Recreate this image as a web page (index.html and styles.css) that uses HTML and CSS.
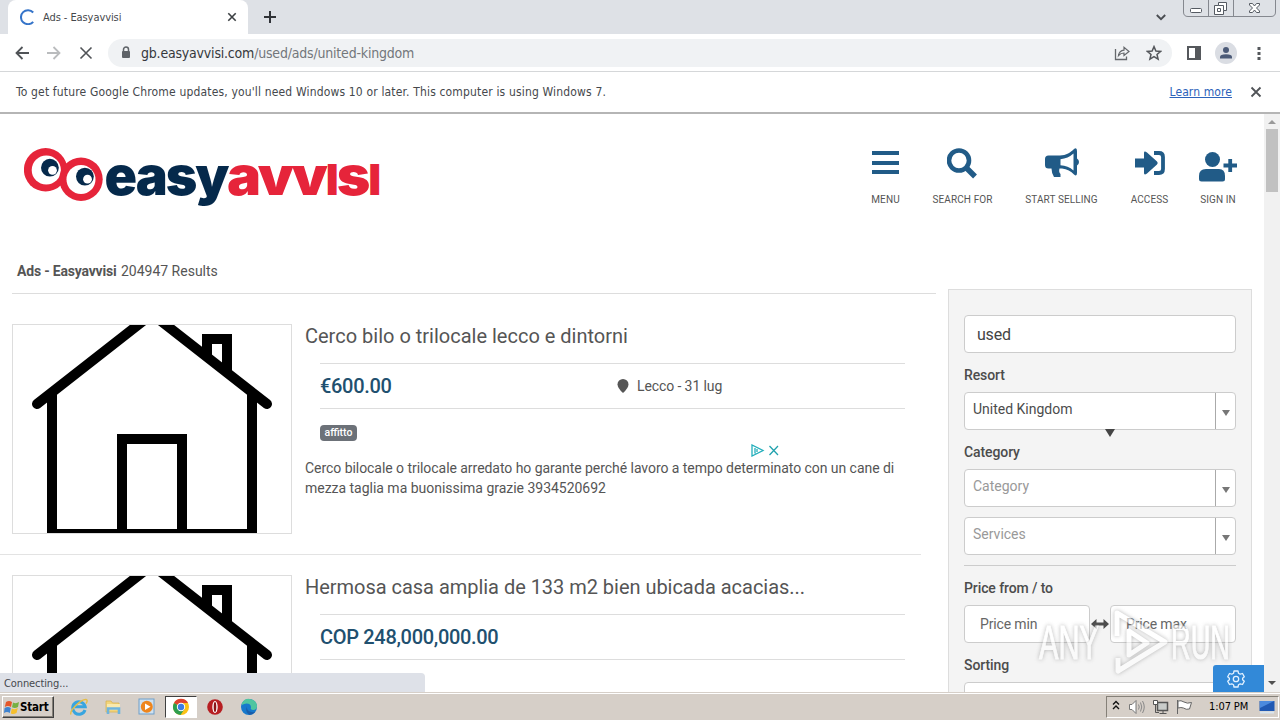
FILE: index.html
```
<!DOCTYPE html>
<html lang="en">

<head>
    <meta charset="utf-8">
    <meta name="viewport" content="width=device-width, initial-scale=1.0">
    <title>Ads - Easyavvisi</title>
    <link rel="stylesheet" href="styles.css">
</head>

<body>
    <!-- shared drawings -->
    <svg class="defs" width="0" height="0">
        <symbol id="house" viewBox="0 0 278 208">
            <g fill="none" stroke="#000" stroke-width="10">
                <path d="M39 66V209M239 66V209M34 209H244"/>
                <path d="M24 79L139 -11L254 79" stroke-linecap="round"/>
                <path d="M109 208V114H169V208"/>
                <path d="M194 34V14H214V50"/>
            </g>
        </symbol>
    </svg>

    <div class="screen">
        <!-- tabs -->
        <div class="tabstrip">
            <div class="tab">
                <svg class="spinner" width="16" height="16" viewBox="0 0 16 16"><path d="M13.2 3.5A7 7 0 1 0 13.2 12.8" fill="none" stroke="#3574c9" stroke-width="2"/></svg>
                <span class="tab-title">Ads - Easyavvisi</span>
                <svg width="10" height="10" viewBox="0 0 10 10"><path d="M1.3 1.3L8.7 8.7M8.7 1.3L1.3 8.7" stroke="#3c4043" stroke-width="1.6"/></svg>
            </div>
            <svg class="new-tab" width="12" height="12" viewBox="0 0 12 12"><path d="M6 0V12M0 6H12" stroke="#303338" stroke-width="2"/></svg>
            <svg class="tab-search" width="10" height="7" viewBox="0 0 10 7"><path d="M.8 1L5 5.2L9.2 1" fill="none" stroke="#4a4d52" stroke-width="1.9"/></svg>
            <svg class="window-buttons" width="93" height="17" viewBox="0 0 93 17">
                <path d="M.5 0V12Q.5 16.5 5 16.5H88Q92.5 16.5 92.5 12V0M25.5 0V16M50.5 0V16" fill="none" stroke="#85888f"/>
                <rect x="7.500" y="8.500" width="11" height="4" rx="1" fill="#fff" stroke="#555a62"/>
                <path d="M35.500 2.500H43.500V10.500H40.500V14.500H31.500V5.500H35.500Z" fill="#fff" stroke="#555a62"/>
                <path d="M35.500 5.500H40.500V10.500M34.500 8.500H37.500V11.500H34.500Z" fill="none" stroke="#555a62"/>
                <path d="M66.500 3.500H69.500L71.500 6L73.500 3.500H76.500V5L73.500 8L76.500 11V12.500H73.500L71.500 10L69.500 12.500H66.500V11L69.500 8L66.500 5Z" fill="#fff" stroke="#555a62"/>
            </svg>
        </div>

        <!-- address bar -->
        <div class="toolbar">
            <div class="nav-buttons">
                <svg width="14" height="14" viewBox="0 0 14 14"><path d="M14 7H1.500M7.500 1L1.500 7L7.500 13" fill="none" stroke="#505357" stroke-width="1.800"/></svg>
                <svg width="14" height="14" viewBox="0 0 14 14"><path d="M0 7H12.500M6.500 1L12.500 7L6.500 13" fill="none" stroke="#babcbe" stroke-width="1.800"/></svg>
                <svg width="14" height="14" viewBox="0 0 14 14"><path d="M1.500 1.500L12.500 12.500M12.500 1.500L1.500 12.500" stroke="#505357" stroke-width="1.600"/></svg>
            </div>
            <div class="omnibox">
                <svg width="10" height="13" viewBox="0 0 10 13"><path d="M2.500 6V3.500A2.500 2.500 0 0 1 7.500 3.500V6" fill="none" stroke="#5f6368" stroke-width="1.500"/><rect x="1" y="5" width="8" height="7" rx="1" fill="#5f6368"/></svg>
                <span class="url"><b>gb.easyavvisi.com</b>/used/ads/united-kingdom</span>
                <svg class="share" width="16" height="16" viewBox="0 0 16 16"><path d="M1.500 4V14.500H12.500V11.500" fill="none" stroke="#65686c" stroke-width="1.300"/><path d="M4.500 10.500C5 7.500 7 5.500 10 5.200V2.200L15 6.500L10 10.500V8C7.500 8 6 8.800 4.500 10.500Z" fill="none" stroke="#65686c" stroke-width="1.200"/></svg>
                <svg width="16" height="16" viewBox="0 0 16 16"><path d="M8 1.600L9.900 6L14.600 6.400L11 9.500L12.100 14.200L8 11.700L3.900 14.200L5 9.500L1.400 6.400L6.100 6Z" fill="none" stroke="#54575b" stroke-width="1.500"/></svg>
            </div>
            <svg class="panel-icon" width="14" height="14" viewBox="0 0 14 14"><rect x="1" y="1" width="12" height="12" fill="none" stroke="#55585c" stroke-width="2"/><rect x="8" y="1" width="5" height="12" fill="#55585c"/></svg>
            <svg class="avatar" width="22" height="22" viewBox="0 0 22 22"><circle cx="11" cy="11" r="11" fill="#dadde3"/><circle cx="11" cy="8" r="3" fill="#4b5a77"/><path d="M5 16.500V15Q5 12.200 11 12.200Q17 12.200 17 15V16.500Z" fill="#4b5a77"/></svg>
            <svg class="dots" width="4" height="14" viewBox="0 0 4 14"><path d="M.5 1H3.500V4H.5ZM.5 6H3.500V9H.5ZM.5 11H3.500V14H.5Z" fill="#55585c"/></svg>
        </div>

        <!-- update notice -->
        <div class="infobar">
            <span class="info-text">To get future Google Chrome updates, you'll need Windows 10 or later. This computer is using Windows 7.</span>
            <a class="learn">Learn more</a>
            <svg width="12" height="12" viewBox="0 0 12 12"><path d="M1.500 1.500L10.500 10.500M10.500 1.500L1.500 10.500" stroke="#505357" stroke-width="1.800"/></svg>
        </div>

        <div class="viewport">
            <div class="page">
                <div class="header">
                    <!-- logo -->
                    <svg class="logo" width="356" height="66" viewBox="24 144 356 66">
                        <circle cx="45.600" cy="169.800" r="21.700" fill="#e6243a"/>
                        <circle cx="46.300" cy="170" r="14.600" fill="#fff"/>
                        <circle cx="81" cy="179.200" r="21.700" fill="#e6243a"/>
                        <circle cx="81" cy="179.500" r="14.500" fill="#fff"/>
                        <circle cx="49.900" cy="167.700" r="8.900" fill="#05294b"/>
                        <circle cx="52.500" cy="170.300" r="4.400" fill="#fff"/>
                        <circle cx="84.900" cy="176.600" r="8.900" fill="#05294b"/>
                        <circle cx="87.500" cy="179.200" r="4.400" fill="#fff"/>
                        <text class="logo-text" x="104.500" y="194.500" textLength="123" lengthAdjust="spacingAndGlyphs" fill="#05294b">easy</text>
                        <text class="logo-text" x="227" y="194.500" textLength="152" lengthAdjust="spacingAndGlyphs" fill="#e6243a">avv<tspan class="logo-cap">I</tspan>s<tspan class="logo-cap">I</tspan></text>
                    </svg>
                    <div class="menu">
                        <div class="menu-item">
                            <svg width="27" height="40" viewBox="0 0 27 40"><path d="M0 9H27M0 19H27M0 28H27" stroke="#215b87" stroke-width="4"/></svg>
                            <span>MENU</span>
                        </div>
                        <div class="menu-item">
                            <svg class="lens" width="30" height="40" viewBox="0 0 30 40"><circle cx="12" cy="16.500" r="10" fill="none" stroke="#215b87" stroke-width="4.600"/><path d="M19 23.500L28 32.500" stroke="#215b87" stroke-width="5.500"/></svg>
                            <span>SEARCH FOR</span>
                        </div>
                        <div class="menu-item">
                            <svg width="34" height="40" viewBox="0 0 34 40"><path d="M3.500 11.500H15C21 11.500 26 8 29 5Q32 3 32 7V14.500Q34 15.500 34 18T32 21.500V29Q32 33 29 30.500C26 27.500 22 25 17 24.500H14.500Q13.500 28 15.500 30V33H9Q6.500 29 6.500 24.500H3.500Q0 24.500 0 21V15Q0 11.500 3.500 11.500Z" fill="#215b87"/><path d="M15.500 15.200Q23 14.500 28.500 9.500V26.500Q23 21.500 15.500 21.200Z" fill="#fff"/></svg>
                            <span>START SELLING</span>
                        </div>
                        <div class="menu-item">
                            <svg width="30" height="40" viewBox="0 0 30 40"><path d="M0 14.500H9V9Q9 6.500 12 8.500L22 17.500Q23.500 19 22 20.500L12 29.500Q9 31.500 9 29V23.500H0Z" fill="#215b87"/><path d="M19 9H24Q28 9 28 13V25Q28 29 24 29H19" fill="none" stroke="#215b87" stroke-width="3.800"/></svg>
                            <span>ACCESS</span>
                        </div>
                        <div class="menu-item">
                            <svg width="38" height="40" viewBox="0 0 38 40"><circle cx="13.500" cy="15.500" r="7.500" fill="#215b87"/><path d="M0 35V32Q0 25 7 25H20Q26 25 26 32V35Q26 37.500 23.500 37.500H2.500Q0 37.500 0 35Z" fill="#215b87"/><path d="M24.500 21.500H38M31.200 15V28" stroke="#215b87" stroke-width="3.800"/></svg>
                            <span>SIGN IN</span>
                        </div>
                    </div>
                </div>

                <div class="content">
                    <div class="results">
                        <div class="results-title"><b>Ads - Easyavvisi</b> <span>204947 Results</span></div>
                        <div class="ad">
                            <div class="photo"><svg width="278" height="208"><use href="#house"/></svg></div>
                            <div class="ad-body">
                                <h2>Cerco bilo o trilocale lecco e dintorni</h2>
                                <div class="ad-row">
                                    <strong>€600.00</strong>
                                    <svg width="12" height="14" viewBox="0 0 12 14"><path d="M6 14Q.5 9 .5 5.500A5.500 5.500 0 0 1 11.500 5.500Q11.500 9 6 14Z" fill="#555"/></svg>
                                    <span class="place">Lecco - 31 lug</span>
                                </div>
                                <span class="badge">affitto</span>
                                <p>Cerco bilocale o trilocale arredato ho garante perché lavoro a tempo determinato con un cane di<br><span>mezza taglia ma buonissima grazie 3934520692</span></p>
                            </div>
                        </div>
                        <div class="ad">
                            <div class="photo"><svg width="278" height="208"><use href="#house"/></svg></div>
                            <div class="ad-body">
                                <h2 class="long">Hermosa casa amplia de 133 m2 bien ubicada acacias...</h2>
                                <div class="ad-row">
                                    <strong>COP 248,000,000.00</strong>
                                </div>
                            </div>
                        </div>
                    </div>

                    <!-- search filters -->
                    <div class="filters">
                        <div class="field used">used</div>
                        <div class="label">Resort</div>
                        <div class="field select dark"><span>United Kingdom</span><i></i></div>
                        <div class="label">Category</div>
                        <div class="field select"><span>Category</span><i></i></div>
                        <div class="field select services"><span>Services</span><i></i></div>
                        <div class="line"></div>
                        <div class="label">Price from / to</div>
                        <div class="prices">
                            <div class="field price">Price min</div>
                            <svg width="18" height="10" viewBox="0 0 18 10"><path d="M0 5L5.500 0V3.500H12.500V0L18 5L12.500 10V6.500H5.500V10Z" fill="#4c4c4c"/></svg>
                            <div class="field price">Price max</div>
                        </div>
                        <div class="label">Sorting</div>
                        <div class="field select"><span></span><i></i></div>
                        <div class="marker"></div>
                    </div>
                </div>

                <svg class="adchoices" width="28" height="13" viewBox="0 0 28 13"><path d="M1 1V12L12 6.500Z M4 4V9.500M6 5V8" fill="none" stroke="#22aebb" stroke-width="1.300"/><path d="M18.500 2L27 11M27 2L18.500 11" stroke="#22a2ae" stroke-width="1.300"/></svg>
                <div class="gear">
                    <svg width="18" height="18" viewBox="0 0 18 18"><path d="M7 1H11L11.500 3.300L13.200 4.200L15.500 3.500L17.300 6.800L15.600 8.300V9.700L17.300 11.200L15.500 14.500L13.200 13.800L11.500 14.700L11 17H7L6.500 14.700L4.800 13.800L2.500 14.500L.7 11.200L2.400 9.700V8.300L.7 6.800L2.500 3.500L4.800 4.200L6.500 3.300Z" fill="none" stroke="#e4f2ff" stroke-width="1.300" stroke-linejoin="round"/><circle cx="9" cy="9" r="2.700" fill="none" stroke="#e4f2ff" stroke-width="1.300"/></svg>
                </div>
            </div>
            <div class="scrollbar">
                <i class="up"></i>
                <div class="thumb"></div>
                <i class="down"></i>
            </div>
            <div class="status">Connecting...</div>
        </div>

        <!-- taskbar -->
        <div class="taskbar">
            <div class="start">
                <svg width="16" height="16" viewBox="0 0 16 16"><path d="M2 3Q5 1 8 3L7 8Q4 6 .8 8Z" fill="#e4572a"/><path d="M9 3.500Q12 5 15 3L14 8Q11 10 8 8.300Z" fill="#76b043"/><path d="M.6 9Q4 7 6.800 9L5.800 14Q3 12 0 14Z" fill="#3f83cf"/><path d="M7.800 9.500Q11 11 13.800 9L12.500 14Q9 16 6.800 14.200Z" fill="#f6bf2c"/></svg>
                <span>Start</span>
            </div>
            <div class="launch">
                <svg width="18" height="18" viewBox="0 0 18 18"><path d="M15 12A6.300 6.300 0 1 1 15.200 8.800H5" fill="none" stroke="#38a5df" stroke-width="3"/><path d="M1 16.500C-1 13 11 1 16 1.500C18 2 17 4 16 5.500" fill="none" stroke="#e5bd45" stroke-width="1.400"/></svg>
                <svg width="18" height="18" viewBox="0 0 18 18"><path d="M2 3H7L8.500 5H15V14H2Z" fill="#f2d57c" stroke="#d8b353" stroke-width=".8"/><path d="M3 6H16V12H3Z" fill="#f9e9ad"/><path d="M4 16V10.500H15V16" fill="none" stroke="#6db4de" stroke-width="2.600"/></svg>
                <svg width="18" height="18" viewBox="0 0 18 18"><rect x="1" y="1" width="15" height="15" fill="#cfe1f0" stroke="#6e9fca"/><circle cx="8.800" cy="8.800" r="6" fill="#ee851d"/><path d="M7 5.500L12.500 8.800L7 12Z" fill="#fff"/></svg>
                <div class="active-app">
                    <svg width="18" height="18" viewBox="0 0 18 18"><circle cx="9" cy="9" r="8" fill="#fbc116"/><path d="M9 9L2 5A8 8 0 0 1 16 5H9Z" fill="#df4230"/><path d="M9 9L2 5A8 8 0 0 0 8.500 17L12.500 11Z" fill="#2e9e4f"/><circle cx="9" cy="9" r="4.200" fill="#fff"/><circle cx="9" cy="9" r="3.200" fill="#3d7de4"/></svg>
                </div>
                <svg width="18" height="18" viewBox="0 0 18 18"><circle cx="9" cy="9" r="7.800" fill="#b71e22"/><ellipse cx="9" cy="9" rx="2.700" ry="6" fill="#fff"/><ellipse cx="9" cy="9" rx="1.300" ry="5" fill="#8c1518"/></svg>
                <svg width="18" height="18" viewBox="0 0 18 18"><circle cx="9" cy="9" r="8" fill="#1679cc"/><path d="M2 5A8 8 0 0 1 17 9Q16.500 12 13 12Q10 12 11 9.500Q11 5.500 6.500 5.500Q4 5.500 2 7Z" fill="#4ec5a0"/><path d="M7 8Q6 13 11.500 14Q14 14.500 15.500 13.500A8 8 0 0 1 9.500 17Q4.500 14 7 8Z" fill="#1a5daa"/></svg>
            </div>
            <div class="tray">
                <svg class="chevrons" width="8" height="10" viewBox="0 0 8 10"><path d="M1 4.500L4 1.500L7 4.500M1 9L4 6L7 9" fill="none" stroke="#111" stroke-width="1.400"/></svg>
                <svg class="speaker" width="18" height="16" viewBox="0 0 18 16"><path d="M1.500 5.500H4L8 1.500V14.500L4 10.500H1.500Z" fill="#fff" stroke="#777"/><path d="M10.500 5.500Q12 8 10.500 10.500M12.500 3.500Q15 8 12.500 12.500M14.500 2Q18 8 14.500 14" fill="none" stroke="#888"/></svg>
                <svg class="network" width="17" height="16" viewBox="0 0 17 16"><path d="M5.500 3.500H15.500V11.500H5.500Z" fill="#c9ccca" stroke="#555" stroke-width="1.500"/><path d="M7.500 14.500H14.500M11 12V14M3.500 6V13.500H7" fill="none" stroke="#555"/><path d="M1.500 1.500H5.500V5.500H1.500Z" fill="#fff" stroke="#555"/></svg>
                <svg class="flag" width="17" height="16" viewBox="0 0 17 16"><path d="M1.500 1V15M2 2Q5 1 8 3Q11 5 15.500 3.500L13.500 10Q10 11 7.500 9Q5 8 2 9Z" fill="#fff" stroke="#666"/></svg>
                <span class="clock">1:07 PM</span>
                <svg width="16" height="14" viewBox="0 0 16 14"><path d="M.5 1H15.500V11H.5Z" fill="#2159b3"/><path d="M1 1H15L1 8Z" fill="#4c8ade"/><path d="M1 12.500H15" stroke="#d8e4ee" stroke-width="2"/></svg>
            </div>
        </div>

        <!-- watermark -->
        <svg class="watermark" width="210" height="76" viewBox="0 0 210 76">
            <g class="mark-shadow">
                <text x="5" y="55" textLength="60" lengthAdjust="spacingAndGlyphs">ANY</text>
                <text x="137" y="55" textLength="59" lengthAdjust="spacingAndGlyphs">RUN</text>
                <path d="M83 32V9L131 38L84 67V54M95 27V51L113 39Z"/>
            </g>
        </svg>
    </div>
</body>

</html>
```

FILE: styles.css
```
/* base */
* {
    box-sizing: border-box;
}

body {
    margin: 0;
    background: #fff;
    overflow: hidden;
    font-family: Roboto, "Liberation Sans", sans-serif;
    color: #555;
}

svg {
    display: block;
    flex: none;
}

.defs {
    position: absolute;
}

.screen {
    position: relative;
    width: 1280px;
    height: 720px;
    display: flex;
    flex-direction: column;
    overflow: hidden;
}

/* browser window */
.tabstrip,
.toolbar,
.infobar,
.status,
.taskbar {
    font-family: "DejaVu Sans Condensed", "DejaVu Sans", sans-serif;
    font-stretch: condensed;
    white-space: nowrap;
    flex: none;
}

.tabstrip {
    height: 34px;
    background: #dee1e6;
    display: flex;
    align-items: center;
    padding-left: 8px;
}

.tab {
    width: 240px;
    height: 34px;
    background: #fff;
    border-radius: 8px 8px 0 0;
    display: flex;
    align-items: center;
    padding: 0 11px 0 12px;
}

.tab-title {
    flex: 1;
    margin-left: 7px;
    font-size: 11px;
    letter-spacing: -0.08px;
    color: #45484c;
}

.new-tab {
    margin-left: 16px;
}

.tab-search {
    margin-left: auto;
}

.window-buttons {
    align-self: flex-start;
    margin: 0 4px 0 17px;
}

.toolbar {
    height: 38px;
    display: flex;
    align-items: center;
    border-bottom: 1px solid #d5d7d9;
    background: #fff;
}

.nav-buttons {
    display: flex;
    gap: 18px;
    padding-left: 15px;
}

.omnibox {
    margin-left: 15px;
    width: 1064px;
    height: 28px;
    border-radius: 14px;
    background: #f0f2f4;
    display: flex;
    align-items: center;
    padding: 0 10px 0 13px;
}

.url {
    flex: 1;
    margin-left: 10px;
    font-size: 14px;
    letter-spacing: -0.2px;
    color: #73777b;
}

.url b {
    font-weight: normal;
    color: #35383c;
}

.share {
    margin-right: 16px;
}

.panel-icon {
    margin-left: 15px;
}

.avatar {
    margin-left: 14px;
}

.dots {
    margin-left: 20px;
}

.infobar {
    height: 42px;
    display: flex;
    align-items: center;
    padding: 0 18px 1px 16px;
    background: #fff;
    border-bottom: 2px solid #b5b5b5;
    font-size: 12px;
    color: #45484c;
}

.info-text {
    flex: 1;
    letter-spacing: 0.16px;
}

.learn {
    color: #2c62ba;
    text-decoration: underline;
    letter-spacing: 0.1px;
    margin-right: 18px;
}

.viewport {
    height: 578px;
    display: flex;
    position: relative;
    overflow: hidden;
}

.page {
    width: 1264px;
    position: relative;
    overflow: hidden;
}

/* site header */
.header {
    height: 140px;
    display: flex;
    justify-content: space-between;
    padding: 30px 29px 0 24px;
}

.logo-text {
    font-family: Inter, "Open Sans", sans-serif;
    font-weight: 900;
    font-size: 54px;
    letter-spacing: -2px;
    stroke: currentColor;
    stroke-width: 0;
}

.logo-cap {
    font-size: 42px;
}

.menu {
    display: grid;
    grid-template-columns: 29px 61px 73px 39px 34px;
    column-gap: 32px;
    align-content: start;
}

.menu-item {
    display: flex;
    flex-direction: column;
    align-items: center;
    font-size: 10px;
    white-space: nowrap;
}

.menu-item span {
    margin-top: 9px;
    line-height: 14px;
    letter-spacing: 0.1px;
}

.lens {
    margin-right: 2px;
}

/* results */
.content {
    display: flex;
}

.results {
    width: 948px;
}

.results-title {
    height: 40px;
    margin: 0 12px 30px;
    padding: 8px 4px 0 5px;
    border-bottom: 1px solid #ddd;
    font-size: 14px;
    line-height: 18px;
}

.results-title b {
    font-weight: 700;
    letter-spacing: -0.2px;
    margin-right: 1px;
}

.ad {
    width: 921px;
    height: 231px;
    padding-left: 12px;
    margin-bottom: 20px;
    border-bottom: 1px solid #e3e3e3;
    display: flex;
}

.photo {
    width: 280px;
    height: 210px;
    border: 1px solid #ddd;
    flex: none;
}

.ad-body {
    width: 600px;
    margin-left: 13px;
}

.ad h2 {
    margin: 0;
    font-size: 20px;
    line-height: 24px;
    font-weight: 400;
    height: 39px;
    white-space: nowrap;
}

.ad .long {
    letter-spacing: -0.03px;
}

.ad-row {
    margin-left: 15px;
    height: 46px;
    border-top: 1px solid #ddd;
    border-bottom: 1px solid #ddd;
    display: flex;
    align-items: center;
    font-size: 14px;
}

.ad-row strong {
    width: 297px;
    font-size: 20px;
    font-weight: 500;
    letter-spacing: -0.32px;
    color: #21506f;
}

.place {
    margin-left: 8px;
    letter-spacing: -0.1px;
}

.badge {
    display: block;
    width: 37px;
    height: 16px;
    margin: 16px 0 0 15px;
    border-radius: 4px;
    background: #6c7178;
    color: #fff;
    text-align: center;
    font-size: 10.5px;
    line-height: 15px;
    font-weight: 500;
}

.ad p {
    margin: 17px 0 0;
    font-size: 14px;
    line-height: 20px;
    letter-spacing: -0.05px;
    white-space: nowrap;
}

.ad p span {
    letter-spacing: -0.02px;
}

.adchoices {
    position: absolute;
    left: 751px;
    top: 330px;
}

/* filters */
.filters {
    position: relative;
    width: 304px;
    height: 500px;
    margin-top: 35px;
    border: 1px solid #ddd;
    background: #f4f4f4;
    padding: 25px 15px;
}

.field {
    height: 38px;
    background: #fff;
    border: 1px solid #ccc;
    border-radius: 4px;
    font-size: 14px;
    display: flex;
    align-items: center;
    padding-left: 12px;
}

.used {
    font-size: 16px;
    letter-spacing: -0.2px;
    color: #444;
}

.label {
    height: 39px;
    line-height: 39px;
    padding-top: 3px;
    font-size: 14px;
    font-weight: 500;
    letter-spacing: -0.1px;
    color: #4c4c4c;
}

.select {
    padding: 0 0 0 8px;
    color: #999;
}

.dark {
    color: #4c4c4c;
}

.select span {
    flex: 1;
    padding-bottom: 4px;
}

.select i {
    width: 20px;
    height: 36px;
    border-left: 1px solid #aaa;
    display: flex;
    align-items: center;
    justify-content: center;
    padding-top: 4px;
}

.select i::after,
.marker {
    content: "";
    border: 4px solid transparent;
    border-top: 6px solid #777;
    border-bottom: 0;
}

.services {
    margin-top: 10px;
}

.line {
    margin-top: 10px;
    border-top: 1px solid #ccc;
}

.prices {
    display: flex;
    justify-content: space-between;
    align-items: center;
}

.price {
    width: 126px;
    padding-left: 15px;
    letter-spacing: -0.15px;
    color: #666;
}

.marker {
    position: absolute;
    left: 156px;
    top: 139px;
    border-width: 8px 5px 0;
    border-top-color: #444;
}

.gear {
    position: absolute;
    right: 0;
    bottom: 0;
    width: 51px;
    height: 27px;
    border-radius: 3px 0 0 0;
    background: #3289d8;
    display: flex;
    align-items: center;
    padding-left: 14px;
}

/* scrollbar */
.scrollbar {
    width: 16px;
    background: #f1f1f1;
    display: flex;
    flex-direction: column;
    align-items: center;
}

.thumb {
    width: 12px;
    height: 63px;
    margin-top: 5px;
    background: #c1c1c1;
}

.up,
.down {
    border: 4px solid transparent;
}

.up {
    margin-top: 6px;
    border-top: 0;
    border-bottom: 4px solid #999;
}

.down {
    margin: auto 0 7px;
    border-bottom: 0;
    border-top: 4px solid #505050;
}

.status {
    position: absolute;
    left: 0;
    bottom: 0;
    width: 425px;
    height: 19px;
    padding-left: 4px;
    border-radius: 0 4px 0 0;
    background: #dee1e8;
    font-size: 11px;
    line-height: 21px;
    letter-spacing: -0.1px;
    color: #45484d;
}

/* taskbar */
.taskbar {
    height: 28px;
    background: #d6cfc8;
    border-top: 1px solid #d6cfc8;
    box-shadow: inset 0 1px #fff;
    display: flex;
    align-items: center;
}

.start {
    width: 52px;
    height: 22px;
    margin: 1px 0 0 2px;
    border: 1px solid;
    border-color: #fff #404040 #404040 #fff;
    box-shadow: inset -1px -1px #858078;
    display: flex;
    align-items: center;
    padding-left: 1px;
    font-size: 11.5px;
    font-weight: bold;
    letter-spacing: -0.2px;
    color: #000;
}

.launch {
    display: flex;
    align-items: center;
    gap: 16px;
    margin: 0 0 0 16px;
}

.active-app {
    width: 32px;
    height: 22px;
    margin: 0 -7px 0 -7px;
    background: #fff;
    border: 1px solid;
    border-color: #404040 #fff #fff #404040;
    display: flex;
    align-items: center;
    justify-content: center;
}

.tray {
    height: 22px;
    width: 173px;
    margin: 0 1px 0 auto;
    border: 1px solid;
    border-color: #858078 #fff #fff #858078;
    display: flex;
    align-items: center;
    padding-left: 5px;
    color: #000;
}

.chevrons {
    margin-bottom: 3px;
}

.speaker {
    margin-left: 8px;
}

.network {
    margin-left: 6px;
}

.flag {
    margin-left: 7px;
}

.clock {
    width: 50px;
    margin-left: 16px;
    font-size: 11px;
    letter-spacing: -0.1px;
}

/* watermark */
.watermark {
    position: absolute;
    left: 1034px;
    top: 604px;
}

.mark-shadow {
    opacity: 0.6;
    filter: drop-shadow(0 0 2px #888);
}

.watermark text {
    font-family: "Liberation Sans", sans-serif;
    font-size: 49px;
    fill: #fff;
    stroke: #fff;
    stroke-width: 1;
}

.watermark path {
    fill: none;
    stroke: #fff;
    stroke-width: 5;
    stroke-linejoin: round;
}
```
